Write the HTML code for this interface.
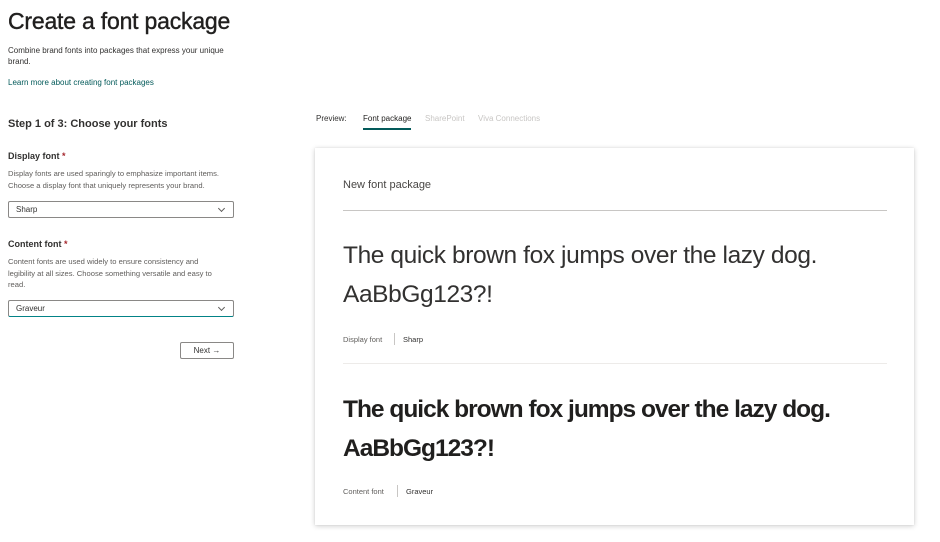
<!DOCTYPE html>
<html><head><meta charset="utf-8"><style>
*{margin:0;padding:0;box-sizing:border-box}
body{width:940px;height:542px;background:#fff;font-family:"Liberation Sans",sans-serif;color:#323130;position:relative;overflow:hidden}
.a{position:absolute;white-space:nowrap}
h1{position:absolute;left:8px;top:8px;font-size:23px;font-weight:normal;color:#201f1e;letter-spacing:-0.2px;-webkit-text-stroke:0.4px #201f1e}
.s{font-size:8px;color:#323130}
.g{font-size:7.6px;color:#605e5c;line-height:11.5px}
.lbl{font-size:9px;font-weight:bold;color:#323130}
.req{color:#a4262c}
.dd{position:absolute;left:8px;width:226px;height:17px;border:1px solid #8a8886;border-radius:2px;font-size:8px;padding:3px 7px}
.dd:after{content:"";position:absolute;right:9px;top:4px;width:4px;height:4px;border-right:1px solid #605e5c;border-bottom:1px solid #605e5c;transform:rotate(45deg)}
.card{position:absolute;left:315px;top:148px;width:599px;height:377px;background:#fff;box-shadow:0 1px 5px rgba(0,0,0,.2),0 0 1px rgba(0,0,0,.1)}
.big{font-size:24.5px;letter-spacing:-0.4px;color:#323130;line-height:39px}
</style></head><body>
<h1>Create a font package</h1>
<div class="a s" style="left:8px;top:45px;line-height:11px">Combine brand fonts into packages that express your unique<br>brand.</div>
<div class="a s" style="left:8px;top:78px;color:#035a5a">Learn more about creating font packages</div>
<div class="a" style="left:8px;top:118px;font-size:11px;font-weight:bold;color:#323130">Step 1 of 3: Choose your fonts</div>
<div class="a lbl" style="left:8px;top:151px">Display font <span class="req">*</span></div>
<div class="a g" style="left:8px;top:168px">Display fonts are used sparingly to emphasize important items.<br>Choose a display font that uniquely represents your brand.</div>
<div class="dd" style="top:201px">Sharp</div>
<div class="a lbl" style="left:8px;top:239px">Content font <span class="req">*</span></div>
<div class="a g" style="left:8px;top:256px">Content fonts are used widely to ensure consistency and<br>legibility at all sizes. Choose something versatile and easy to<br>read.</div>
<div class="dd" style="top:300px;border-bottom:1.5px solid #038387">Graveur</div>
<div class="a" style="left:180px;top:342px;width:54px;height:17px;border:1px solid #8a8886;border-radius:2px;font-size:8px;text-align:center;padding-top:3px">Next &#8594;</div>
<div class="a" style="left:316px;top:114px;font-size:8px;color:#323130">Preview:</div>
<div class="a" style="left:363px;top:114px;font-size:8px;color:#201f1e">Font package</div>
<div class="a" style="left:363px;top:128px;width:48px;height:2px;background:#035a5a"></div>
<div class="a" style="left:425px;top:114px;font-size:8px;color:#c8c6c4">SharePoint</div>
<div class="a" style="left:478px;top:114px;font-size:8px;color:#c8c6c4">Viva Connections</div>
<div class="card">
<div class="a" style="left:28px;top:31px;font-size:11px;color:#484644">New font package</div>
<div class="a" style="left:28px;top:62px;width:544px;height:1px;background:#c8c6c4"></div>
<div class="a big" style="left:28px;top:88px">The quick brown fox jumps over the lazy dog.<br>AaBbGg123?!</div>
<div class="a" style="left:28px;top:187px;font-size:7.5px;color:#605e5c">Display font</div>
<div class="a" style="left:79px;top:185px;width:1px;height:12px;background:#c8c6c4"></div>
<div class="a" style="left:88px;top:187px;font-size:7.5px;color:#323130">Sharp</div>
<div class="a" style="left:28px;top:215px;width:544px;height:1px;background:#edebe9"></div>
<div class="a big" style="left:28px;top:242px;font-weight:bold;letter-spacing:-1px;color:#201f1e">The quick brown fox jumps over the lazy dog.<br>AaBbGg123?!</div>
<div class="a" style="left:28px;top:339px;font-size:7.5px;color:#605e5c">Content font</div>
<div class="a" style="left:82px;top:337px;width:1px;height:12px;background:#c8c6c4"></div>
<div class="a" style="left:91px;top:339px;font-size:7.5px;color:#323130">Graveur</div>
</div>
</body></html>
